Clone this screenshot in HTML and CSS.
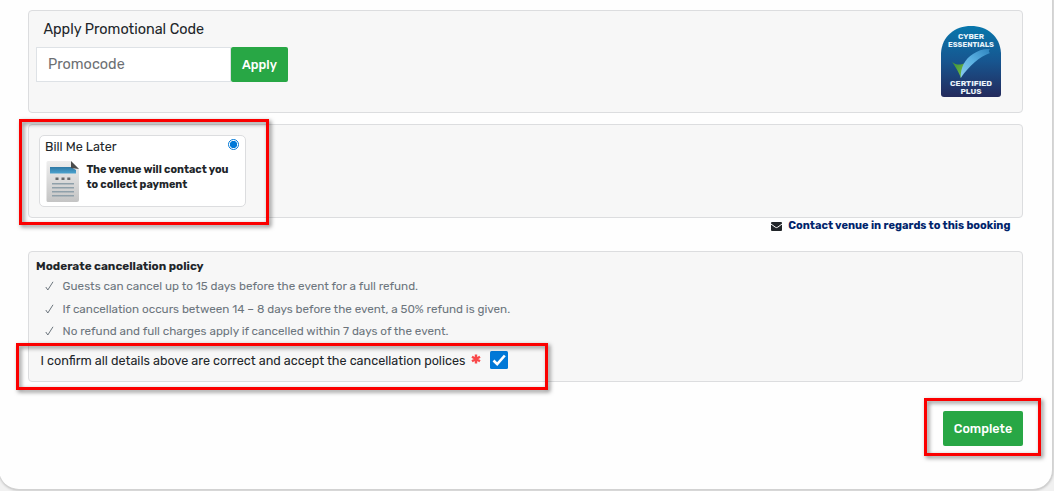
FILE: index.html
```
<!DOCTYPE html>
<html lang="en">
<head>
  <meta charset="UTF-8" />
  <meta name="viewport" content="width=device-width, initial-scale=1.0"/>
  <title>Booking - Payment</title>
  <link rel="stylesheet" href="styles.css">
</head>
<body>

  <main class="card">
    <section class="panel promo">
      <div class="promo-form">
        <label class="promo-label" for="promocode">Apply Promotional Code</label>
        <div class="promo-row">
          <input class="promo-input" id="promocode" type="text" placeholder="Promocode">
          <button class="btn btn-apply">Apply</button>
        </div>
      </div>
      <svg class="cert" viewBox="0 0 60 71">
        <defs>
          <linearGradient id="badge" x1="0" y1="0" x2="0" y2="1">
            <stop offset="0" stop-color="#0877ac"/>
            <stop offset=".5" stop-color="#17558f"/>
            <stop offset="1" stop-color="#232a5c"/>
          </linearGradient>
          <linearGradient id="tick" x1="0" y1="1" x2="1" y2="0">
            <stop offset="0" stop-color="#8ccbee"/>
            <stop offset=".5" stop-color="#5ab0e2"/>
            <stop offset="1" stop-color="#2d83bd"/>
          </linearGradient>
          <linearGradient id="leaf" x1="0" y1="0" x2="1" y2="1">
            <stop offset="0" stop-color="#3c8f3c"/>
            <stop offset="1" stop-color="#7cc142"/>
          </linearGradient>
        </defs>
        <path fill="url(#badge)" d="M0 27C1 10 14 0 30 0s29 10 30 27v41a3 3 0 0 1-3 3H3a3 3 0 0 1-3-3z"/>
        <path fill="url(#leaf)" d="M11 36c4 3 8 3.500 13 1l-4 15c-1-3-5-11-9-16z"/>
        <path fill="url(#tick)" d="M19.700 52C19.500 41 24 33 32 28 37 24.500 43 22.500 49 23c-1.500 1.500-1.500 3 0 4C38 31 29 39 19.700 52z"/>
        <g class="cert-text">
          <text x="17" y="13" textLength="26" lengthAdjust="spacingAndGlyphs">CYBER</text>
          <text x="7" y="20.5" textLength="46" lengthAdjust="spacingAndGlyphs">ESSENTIALS</text>
          <text x="9" y="60" textLength="42" lengthAdjust="spacingAndGlyphs">CERTIFIED</text>
          <text x="19.500" y="67.5" textLength="21" lengthAdjust="spacingAndGlyphs">PLUS</text>
        </g>
      </svg>
    </section>

    <section class="panel payment">
      <label class="method">
        <span class="method-head">
          <span class="method-name">Bill Me Later</span>
          <input class="radio" type="radio" name="method" checked>
        </span>
        <span class="method-body">
          <svg class="invoice" viewBox="0 0 34 42">
            <defs>
              <linearGradient id="sheet" x1="0" y1="0" x2="0" y2="1">
                <stop offset="0" stop-color="#eeeeee"/>
                <stop offset="1" stop-color="#c4c4c4"/>
              </linearGradient>
              <linearGradient id="bar" x1="0" y1="0" x2="0" y2="1">
                <stop offset="0" stop-color="#2f79a5"/>
                <stop offset="1" stop-color="#4ba3cf"/>
              </linearGradient>
            </defs>
            <path fill="url(#sheet)" d="M3 0h23l8 8v31a2 2 0 0 1-2 2H3a1.500 1.500 0 0 1-1.500-1.500v-38A1.500 1.500 0 0 1 3 0z"/>
            <path fill="url(#bar)" d="M5 6h21l5 3v3.500H5z"/>
            <path fill="#4b4b4b" d="M26 0l8 8-8-1z"/>
            <path stroke="#66696b" stroke-width="2.600" d="M10.500 17.700h3M16.500 17.700h3M22.300 17.700h3"/>
            <path stroke="#8fa0aa" stroke-width="1.400" d="M7 22.800h22M7 26.800h22M7 30.800h22M7 34.800h22"/>
          </svg>
          <span class="method-text">The venue will contact you<br>to collect payment</span>
        </span>
      </label>
    </section>

    <div class="contact">
      <svg class="mail" viewBox="0 0 11 9">
        <rect width="11" height="9" rx="1" fill="#212529"/>
        <path d="M0 2l4.300 3.200q1.200.8 2.400 0L11 2" fill="none" stroke="#fff"/>
      </svg>
      <a class="contact-link">Contact venue in regards to this booking</a>
    </div>

    <section class="panel policy">
      <h2 class="policy-title">Moderate cancellation policy</h2>
      <ul class="policy-list">
        <li><svg class="check" viewBox="0 0 9 10"><path d="M.8 6l2 3L8 .8"/></svg>Guests can cancel up to 15 days before the event for a full refund.</li>
        <li><svg class="check" viewBox="0 0 9 10"><path d="M.8 6l2 3L8 .8"/></svg>If cancellation occurs between 14 – 8 days before the event, a 50% refund is given.</li>
        <li><svg class="check" viewBox="0 0 9 10"><path d="M.8 6l2 3L8 .8"/></svg>No refund and full charges apply if cancelled within 7 days of the event.</li>
      </ul>
      <label class="confirm">
        <span class="confirm-text">I confirm all details above are correct and accept the cancellation polices</span>
        <svg class="required" viewBox="0 0 10 10"><path d="M5 .5v9M1 2.700l8 4.600M9 2.700L1 7.300"/></svg>
        <svg class="checkbox" viewBox="0 0 18 18"><rect width="18" height="18" rx="1.500"/><path d="M3.500 9.500l3.700 3.700L14.800 4.500"/></svg>
      </label>
    </section>

    <div class="actions">
      <button class="btn btn-complete">Complete</button>
    </div>
  </main>

  <div class="mark mark-method"></div>
  <div class="mark mark-confirm"></div>
  <div class="mark mark-complete"></div>

</body>
</html>
```
FILE: styles.css
```
* {
  box-sizing: border-box;
}
body {
  margin: 0;
  height: 491px;
  overflow: hidden;
  background: #f1f1f1;
  color: #212529;
  font-family: Rubik, Roboto, sans-serif;
  font-size: 12.6px;
}
.card {
  width: 1054px;
  height: 492px;
  margin: -2px 0 0 -1px;
  padding: 12px 29px 0 29px;
  background: #fefefe;
  border: solid #d2d2d2;
  border-width: 0 1px 1px 0;
  border-radius: 0 0 20px 20px;
  box-shadow: 0 0 3px rgba(0, 0, 0, 0.3);
}
.panel {
  width: 995px;
  background: #f7f7f7;
  border: 1px solid #dcdddf;
  border-radius: 4px;
}
.promo {
  display: flex;
  justify-content: space-between;
  height: 103px;
  padding: 9px 21px 0 7px;
}
.promo-label {
  display: block;
  height: 27px;
  padding-left: 7.4px;
  font-size: 14.4px;
  line-height: 19px;
}
.promo-row {
  display: flex;
}
.promo-input {
  width: 195px;
  height: 35px;
  padding: 0 11px;
  border: 1px solid #dee2e6;
  font: 14.4px Rubik, Roboto, sans-serif;
}
.promo-input::placeholder {
  color: #6c6f73;
}
.btn {
  height: 35px;
  padding: 0;
  border: none;
  border-radius: 2px;
  background: #28a745;
  color: #fff;
  font: 460 12.6px Rubik, Roboto, sans-serif;
}
.btn-apply {
  width: 57px;
}
.cert {
  width: 60px;
  height: 71px;
  margin-top: 6px;
}
.cert-text {
  fill: #e9f3fa;
  font: bold 7.4px Rubik, Roboto, sans-serif;
}
.payment {
  height: 94px;
  margin-top: 11px;
  padding: 10px;
}
.method {
  display: block;
  width: 207px;
  height: 72px;
  padding: 3px 6px 0 5px;
  background: #fff;
  border: 1px solid #dcdddf;
  border-radius: 5px;
}
.method-head {
  display: flex;
  justify-content: space-between;
  height: 22px;
  line-height: 16px;
}
.radio {
  appearance: none;
  width: 11px;
  height: 11px;
  margin: 0;
  border: 1px solid #0078d7;
  border-radius: 50%;
  background: radial-gradient(#0078d7 3.3px, #fff 4px);
}
.method-body {
  display: flex;
  gap: 7.4px;
}
.invoice {
  width: 34px;
  height: 42px;
}
.method-text {
  padding-top: 1px;
  font-size: 10.8px;
  font-weight: 700;
  line-height: 15px;
}
.contact {
  display: flex;
  justify-content: flex-end;
  align-items: center;
  gap: 6px;
  height: 15px;
  padding-right: 12.6px;
}
.mail {
  width: 11px;
  height: 9px;
  margin-top: 2px;
}
.contact-link {
  color: #00246b;
  font-size: 11px;
  font-weight: 700;
}
.policy {
  height: 131px;
  margin-top: 18px;
  padding: 7px;
}
.policy-title {
  margin: 0;
  font-size: 11.7px;
  line-height: 15px;
}
.policy-list {
  margin: 0;
  padding: 1px 0 0 9px;
  list-style: none;
  color: #6c757d;
  font-size: 11.7px;
}
.policy-list li {
  display: flex;
  align-items: center;
  gap: 8.6px;
  height: 22.4px;
}
.check {
  width: 9px;
  height: 10px;
  fill: none;
  stroke: #6c757d;
}
.confirm {
  display: flex;
  align-items: center;
  height: 20px;
  margin-top: 8px;
  padding-left: 4.6px;
}
.required {
  width: 10px;
  height: 10px;
  margin: -3px 9px 0 5.4px;
  stroke: #f9484a;
  stroke-width: 2.4;
}
.checkbox {
  width: 18px;
  height: 18px;
  fill: #0078d7;
}
.checkbox path {
  fill: none;
  stroke: #fff;
  stroke-width: 2.6;
}
.actions {
  display: flex;
  justify-content: flex-end;
  margin-top: 29px;
}
.btn-complete {
  width: 80px;
}
.mark {
  position: absolute;
  border: 3px solid #fb0000;
  filter: drop-shadow(2px 2px 2px rgba(0, 0, 0, 0.5));
  pointer-events: none;
}
.mark-method {
  left: 19px;
  top: 119px;
  width: 250px;
  height: 106px;
}
.mark-confirm {
  left: 16px;
  top: 343px;
  width: 532px;
  height: 47px;
}
.mark-complete {
  left: 924px;
  top: 398px;
  width: 117px;
  height: 58px;
}
```
